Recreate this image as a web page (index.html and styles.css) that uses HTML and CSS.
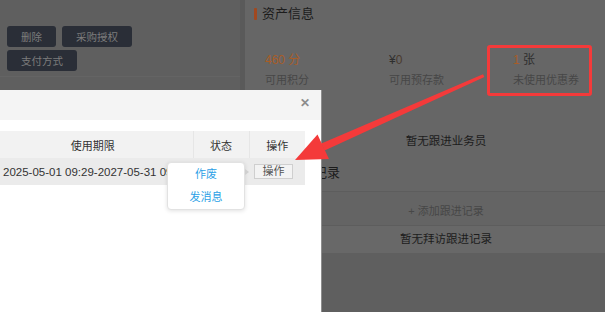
FILE: index.html
```html
<!DOCTYPE html>
<html>
<head>
    <title>客户详情</title>
    <meta charset="UTF-8">
    <link rel="stylesheet" href="styles.css">
</head>
<body>
    <div class="page">
        <aside class="side">
            <div class="btns">
                <button class="btn">删除</button>
                <button class="btn">采购授权</button>
                <button class="btn">支付方式</button>
            </div>
            <div class="side-line"></div>
        </aside>
        <div class="split"></div>
        <main class="panel">
            <h3 class="title">资产信息</h3>
            <div class="stats">
                <div class="stat">
                    <div class="num org">460 分</div>
                    <div class="lbl">可用积分</div>
                </div>
                <div class="stat">
                    <div class="num">¥<span class="org-dark">0</span></div>
                    <div class="lbl">可用预存款</div>
                </div>
                <div class="stat">
                    <div class="num"><span class="org">1</span> 张</div>
                    <div class="lbl">未使用优惠券</div>
                </div>
            </div>
            <div class="empty">暂无跟进业务员</div>
            <h3 class="title title-2">拜访跟进记录</h3>
            <div class="add">+ 添加跟进记录</div>
            <div class="band">暂无拜访跟进记录</div>
            <div class="rest"></div>
        </main>
    </div>

    <!-- coupon dialog -->
    <div class="modal">
        <div class="modal-head">
            <span class="close">✕</span>
        </div>
        <table class="grid">
            <thead>
                <tr>
                    <th class="col-date">使用期限</th>
                    <th class="col-state">状态</th>
                    <th class="col-op">操作</th>
                </tr>
            </thead>
            <tbody>
                <tr>
                    <td class="date">2025-05-01 09:29-2027-05-31 09:29</td>
                    <td></td>
                    <td class="op"><span class="op-btn">操作</span></td>
                </tr>
            </tbody>
        </table>
        <div class="pop">
            <a class="pop-item">作废</a>
            <a class="pop-item">发消息</a>
        </div>
    </div>

    <!-- annotation -->
    <div class="mark"></div>
    <svg class="arrow" width="605" height="312" viewBox="0 0 605 312">
        <polygon points="483,74.2 484.4,77 324.6,150.4 321.4,143.6" fill="#f43a3a"/>
        <polygon points="295,160 317.5,134.5 329,159" fill="#f43a3a"/>
    </svg>
</body>
</html>
```

FILE: styles.css
```css
* {
    margin: 0;
    padding: 0;
    box-sizing: border-box;
}

body {
    width: 605px;
    height: 312px;
    overflow: hidden;
    position: relative;
    font-family: 'Liberation Sans', 'Noto Sans CJK SC', sans-serif;
    background: #5f5f5f;
}

.page {
    display: flex;
    width: 605px;
    height: 312px;
    overflow: hidden;
}

.side {
    width: 240px;
    flex-shrink: 0;
    background: #5f5f5f;
    padding-top: 26px;
}

.btns {
    display: flex;
    flex-wrap: wrap;
    gap: 3px 6px;
    width: 140px;
    padding-left: 7px;
}

.btn {
    height: 21px;
    padding: 0 14px;
    border: none;
    border-radius: 3px;
    background: #2a2e37;
    color: #7c7c7c;
    font-family: inherit;
    font-size: 10.5px;
}

.side-line {
    margin-top: 5px;
    height: 1px;
    background: #646464;
}

.split {
    width: 5px;
    flex-shrink: 0;
    background: #5a5a5a;
}

.panel {
    width: 402px;
    flex-shrink: 0;
    background: #666;
    display: flex;
    flex-direction: column;
}

.title {
    margin-top: 4px;
    padding-left: 9px;
    display: flex;
    align-items: center;
    gap: 5px;
    font-size: 13px;
    font-weight: normal;
    line-height: 20px;
    color: #1c1c1c;
}

.title::before {
    content: '';
    width: 3px;
    height: 12px;
    border-radius: 1px;
    background: #a1481f;
}

.title-2 {
    margin-top: 12px;
}

.stats {
    display: flex;
    margin-top: 28px;
    padding-left: 20px;
}

.stat {
    width: 124px;
}

.num {
    font-size: 12px;
    line-height: 16px;
    color: #2e2e2e;
}

.org {
    color: #a85d28;
}

.org-dark {
    color: #4a3a2e;
}

.lbl {
    margin-top: 4px;
    font-size: 11px;
    line-height: 16px;
    color: #474747;
}

.empty {
    margin-top: 43px;
    text-align: center;
    font-size: 11.5px;
    line-height: 20px;
    color: #1c1c1c;
}

.add {
    margin-top: 8px;
    border-top: 1px solid #5d5d5d;
    border-bottom: 1px solid #5d5d5d;
    padding: 11px 0 6px;
    text-align: center;
    font-size: 11px;
    line-height: 16px;
    color: #474747;
    background: #646464;
}

.band {
    height: 27px;
    line-height: 27px;
    text-align: center;
    font-size: 11.5px;
    color: #1c1c1c;
    background: #686868;
}

.rest {
    flex: 1;
    background: #5f5f5f;
}

.modal {
    position: absolute;
    left: 0;
    top: 90px;
    width: 322px;
    bottom: 0;
    background: #fff;
    border-right: 1px solid #8e8e8e;
}

.modal-head {
    height: 30px;
    background: #f4f4f4;
    position: relative;
}

.close {
    position: absolute;
    right: 11px;
    top: 6px;
    font-size: 12px;
    font-weight: bold;
    color: #8c8c8c;
}

.grid {
    margin-top: 11px;
    margin-left: -7px;
    width: 312px;
    border-collapse: collapse;
    table-layout: fixed;
    font-size: 11px;
    color: #333;
}

.grid th {
    height: 27px;
    font-weight: normal;
    background: #f2f2f2;
    border-left: 1px solid #e6e6e6;
}

.grid th:first-child {
    border-left: none;
}

.col-date { width: 200px; }
.col-state { width: 56px; }
.col-op { width: 56px; }

.grid td {
    height: 27px;
    background: #ebebeb;
    white-space: nowrap;
    overflow: hidden;
}

.date {
    padding-left: 10px;
    font-size: 11.5px;
    color: #333;
}

.op {
    padding-left: 5px;
}

.op-btn {
    display: block;
    width: 39px;
    height: 15px;
    border: 1px solid #cfcfcf;
    background: #f3f3f3;
    color: #555;
    font-size: 11px;
    line-height: 13px;
    text-align: center;
}

.pop {
    position: absolute;
    left: 167px;
    top: 72px;
    width: 78px;
    height: 48px;
    background: #fff;
    border: 1px solid #e2e2e2;
    border-radius: 4px;
    box-shadow: 0 1px 4px rgba(0, 0, 0, 0.12);
}

.pop::after {
    content: '';
    position: absolute;
    right: -5px;
    top: 6px;
    border-left: 4px solid #cfcfcf;
    border-top: 3px solid transparent;
    border-bottom: 3px solid transparent;
}

.pop-item {
    display: block;
    height: 23px;
    line-height: 23px;
    text-align: center;
    font-size: 11px;
    color: #2b9fe6;
}

.mark {
    position: absolute;
    left: 487px;
    top: 45px;
    width: 105px;
    height: 51px;
    border: 3px solid #f43a3a;
    border-radius: 3px;
}

.arrow {
    position: absolute;
    left: 0;
    top: 0;
}
```
